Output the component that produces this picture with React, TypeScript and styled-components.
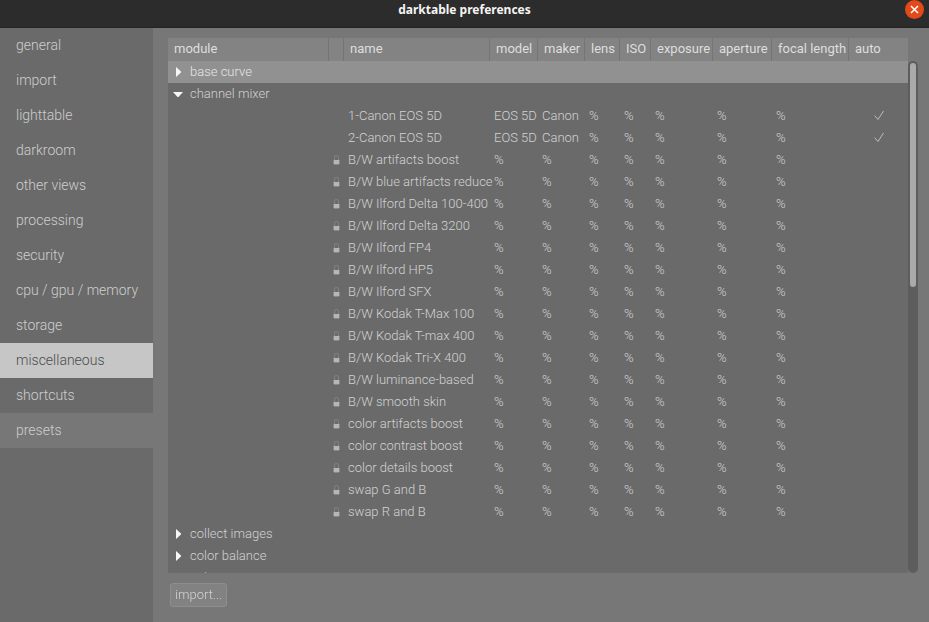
import React, { useState } from "react";
import styled, { createGlobalStyle } from "styled-components";

const GlobalStyle = createGlobalStyle`
  * { box-sizing: border-box; }
  body {
    margin: 0;
    background: #777777;
    font-family: Roboto, "Liberation Sans", sans-serif;
    font-weight: 300;
    color: #d2d2d2;
  }
  button { font: inherit; color: inherit; }
`;

const Window = styled.div`
  display: flex;
  flex-direction: column;
  height: 100vh;
  overflow: hidden;
`;

const TitleBar = styled.header`
  display: grid;
  grid-template-columns: 1fr auto 1fr;
  flex: none;
  height: 28px;
  background: #2c2c2c;
  border-bottom: 1px solid #232323;
`;

const Title = styled.h1`
  grid-column: 2;
  margin: 0;
  font-family: "Noto Sans", sans-serif;
  font-size: 12px;
  font-weight: 700;
  line-height: 20px;
  color: #f4f4f2;
`;

const CloseButton = styled.button`
  display: grid;
  place-items: center;
  justify-self: end;
  width: 19px;
  height: 19px;
  margin-right: 5px;
  padding: 0;
  border: 0;
  border-radius: 50%;
  background: #e24a19;
  color: #ffffff;
`;

const Body = styled.div`
  display: flex;
  flex: 1;
  min-height: 0;
`;

const Sidebar = styled.nav`
  display: flex;
  flex-direction: column;
  flex: none;
  width: 153px;
  background: #6a6a6a;
`;

const SideItem = styled.button<{ $state?: "selected" | "hover" }>`
  height: 35px;
  padding: 0 16px;
  border: 0;
  text-align: left;
  white-space: nowrap;
  font-size: 14px;
  line-height: 35px;
  background: ${(p) =>
    p.$state === "selected" ? "#c6c6c6" : p.$state === "hover" ? "#777777" : "transparent"};
  color: ${(p) => (p.$state === "selected" ? "#4c4c4c" : "#cecece")};
`;

const Main = styled.main`
  display: flex;
  flex-direction: column;
  align-items: stretch;
  gap: 10px;
  flex: 1;
  min-width: 0;
  padding: 10px 11px 15px 15px;
`;

const ListArea = styled.div`
  display: flex;
  flex: 1;
  min-height: 0;
`;

const Viewport = styled.div`
  flex: 1;
  min-width: 0;
  overflow: auto;
  scrollbar-width: none;
  background: #6a6a6a;
`;

const Track = styled.div`
  flex: none;
  width: 10px;
  margin-top: 23px;
  padding: 2px;
  border-radius: 5px;
  background: #5d5d5d;
`;

const Thumb = styled.div`
  height: 44%;
  border-radius: 3px;
  background: #aaaaaa;
`;

const Table = styled.table`
  width: 100%;
  table-layout: fixed;
  border-collapse: separate;
  border-spacing: 0;
  font-size: 13px;
  line-height: 22px;
  white-space: nowrap;
`;

const Col = styled.col<{ $width?: number }>`
  width: ${(p) => (p.$width ? `${p.$width}px` : "auto")};
`;

const HeadCell = styled.th`
  position: sticky;
  top: 0;
  height: 23px;
  padding: 0 0 2px 6px;
  text-align: left;
  font-weight: 400;
  line-height: 21px;
  background: #838383;
  color: #dedede;
  &:not(:last-child) { border-right: 1px solid #757575; }
`;

const Row = styled.tr<{ $selected?: boolean }>`
  height: 22px;
  background: ${(p) => (p.$selected ? "#919191" : "transparent")};
  color: ${(p) => (p.$selected ? "#e6e6e6" : "#d2d2d2")};
`;

const Cell = styled.td`
  height: 22px;
  padding: 0 0 0 4px;
`;

const IconCell = styled(Cell)`
  padding: 0;
  text-align: center;
  line-height: 0;
`;

const Expander = styled.button`
  display: flex;
  align-items: center;
  gap: 6px;
  width: 100%;
  height: 22px;
  padding: 0;
  border: 0;
  background: none;
`;

const ImportButton = styled.button`
  align-self: flex-start;
  height: 24px;
  margin-left: 2px;
  padding: 0 4px;
  border: 1px solid #8e8e8e;
  border-radius: 3px;
  background: #828282;
  font-size: 13px;
  line-height: 20px;
`;

const CloseIcon = () => (
  <svg width="9" height="9" viewBox="0 0 9 9" stroke="currentColor" strokeWidth="1.5" aria-hidden>
    <path d="M1 1 8 8M8 1 1 8" />
  </svg>
);

const Arrow = ({ open }: { open: boolean }) => (
  <svg width="12" height="12" viewBox="0 0 12 12" fill="#f6f6f6" aria-hidden>
    <path d={open ? "M1 4H11L6.5 9H5.5Z" : "M4 1 9 5.5V6.5L4 11Z"} />
  </svg>
);

const Lock = () => (
  <svg width="7" height="10" viewBox="0 0 7 10" role="img" aria-label="read-only">
    <path d="M1.5 5V2.5Q1.5 0.5 3.5 0.5T5.5 2.5V5" fill="none" stroke="#858585" />
    <path d="M1 5H6V9H1Z" fill="#b6b6b6" />
    <path d="M0 5H1V9H0ZM6 5H7V9H6ZM1 9H6V10H1Z" fill="#888888" />
  </svg>
);

const Check = () => (
  <svg width="10" height="12" viewBox="0 0 10 12" fill="none" stroke="#bdbdbd" role="img" aria-label="auto">
    <path d="M0.5 5.5 4 9.5 9.5 1" />
  </svg>
);

const sections = [
  "general", "import", "lighttable", "darkroom", "other views", "processing", "security",
  "cpu / gpu / memory", "storage", "miscellaneous", "shortcuts", "presets",
];

const columns: { label: string; width?: number }[] = [
  { label: "module", width: 161 },
  { label: "", width: 15 },
  { label: "name", width: 146 },
  { label: "model", width: 48 },
  { label: "maker", width: 47 },
  { label: "lens", width: 35 },
  { label: "ISO", width: 31 },
  { label: "exposure", width: 62 },
  { label: "aperture", width: 59 },
  { label: "focal length", width: 77 },
  { label: "auto" },
];

interface Preset {
  name: string;
  model: string;
  maker: string;
  own: boolean;
}

const builtIn = (name: string): Preset => ({ name, model: "%", maker: "%", own: false });
const forCamera = (name: string): Preset => ({ name, model: "EOS 5D", maker: "Canon", own: true });

const modules: { name: string; presets: Preset[] }[] = [
  { name: "base curve", presets: [] },
  {
    name: "channel mixer",
    presets: [
      forCamera("1-Canon EOS 5D"),
      forCamera("2-Canon EOS 5D"),
      ...[
        "B/W artifacts boost", "B/W blue artifacts reduce", "B/W Ilford Delta 100-400",
        "B/W Ilford Delta 3200", "B/W Ilford FP4", "B/W Ilford HP5", "B/W Ilford SFX",
        "B/W Kodak T-Max 100", "B/W Kodak T-max 400", "B/W Kodak Tri-X 400",
        "B/W luminance-based", "B/W smooth skin", "color artifacts boost",
        "color contrast boost", "color details boost", "swap G and B", "swap R and B",
      ].map(builtIn),
    ],
  },
  { name: "collect images", presets: [] },
  { name: "color balance", presets: [] },
  { name: "color contrast", presets: [] },
];

export default function App() {
  const [section, setSection] = useState("presets");
  const [open, setOpen] = useState<string[]>(["channel mixer"]);
  const toggle = (name: string) =>
    setOpen((list) => (list.includes(name) ? list.filter((n) => n !== name) : [...list, name]));

  return (
    <Window>
      <GlobalStyle />
      <TitleBar>
        <Title>darktable preferences</Title>
        <CloseButton aria-label="close"><CloseIcon /></CloseButton>
      </TitleBar>
      <Body>
        <Sidebar>
          {sections.map((name) => (
            <SideItem
              key={name}
              onClick={() => setSection(name)}
              $state={name === "miscellaneous" ? "selected" : name === section ? "hover" : undefined}
            >
              {name}
            </SideItem>
          ))}
        </Sidebar>
        <Main>
          <ListArea>
            <Viewport>
              <Table>
                <colgroup>
                  {columns.map((c, i) => <Col key={i} $width={c.width} />)}
                </colgroup>
                <thead>
                  <tr>{columns.map((c, i) => <HeadCell key={i} scope="col">{c.label}</HeadCell>)}</tr>
                </thead>
                <tbody>
                  {modules.map((m) => (
                    <React.Fragment key={m.name}>
                      <Row $selected={m.name === "base curve"}>
                        <Cell colSpan={columns.length}>
                          <Expander aria-expanded={open.includes(m.name)} onClick={() => toggle(m.name)}>
                            <Arrow open={open.includes(m.name)} />
                            {m.name}
                          </Expander>
                        </Cell>
                      </Row>
                      {open.includes(m.name) && m.presets.map((p) => (
                        <Row key={p.name}>
                          <Cell />
                          <IconCell>{!p.own && <Lock />}</IconCell>
                          <Cell>{p.name}</Cell>
                          <Cell>{p.model}</Cell>
                          <Cell>{p.maker}</Cell>
                          <Cell>%</Cell>
                          <Cell>%</Cell>
                          <Cell>%</Cell>
                          <Cell>%</Cell>
                          <Cell>%</Cell>
                          <IconCell>{p.own && <Check />}</IconCell>
                        </Row>
                      ))}
                    </React.Fragment>
                  ))}
                </tbody>
              </Table>
            </Viewport>
            <Track><Thumb /></Track>
          </ListArea>
          <ImportButton>import...</ImportButton>
        </Main>
      </Body>
    </Window>
  );
}
